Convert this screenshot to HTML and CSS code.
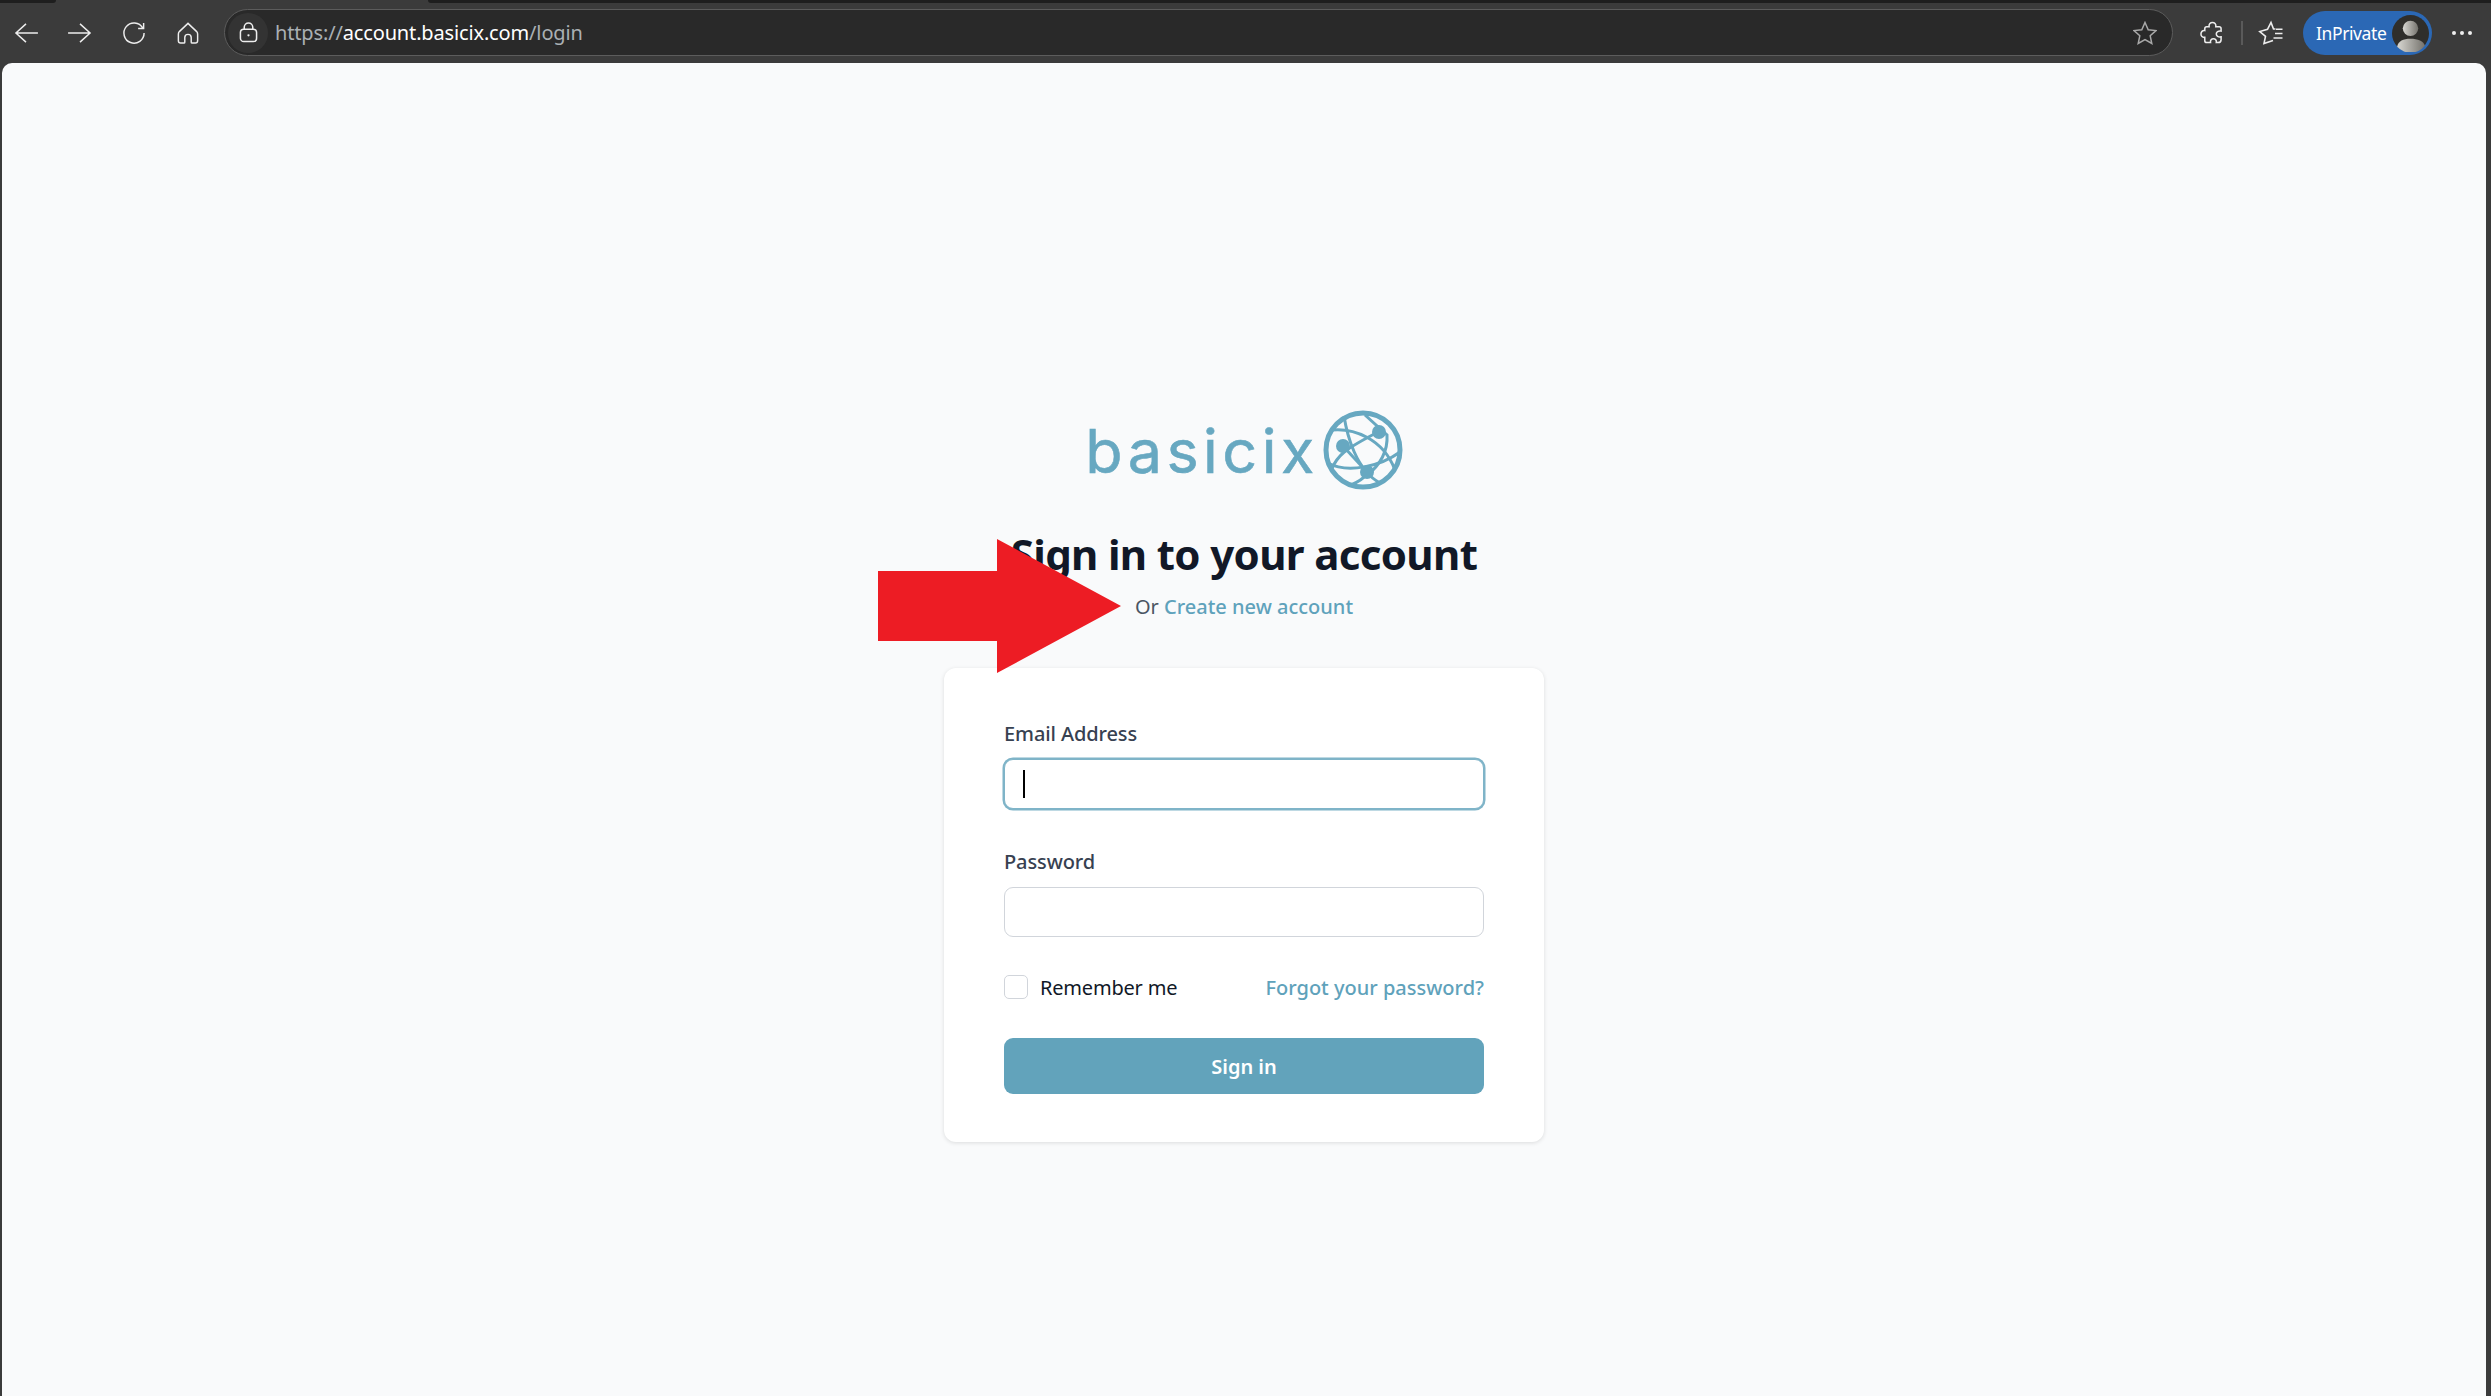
FILE: index.html
```html
<!DOCTYPE html>
<html lang="en">
<head>
    <meta charset="UTF-8">
    <meta name="viewport" content="width=device-width, initial-scale=1.0">
    <title>Sign in - basicix</title>
    <link rel="stylesheet" href="styles.css">
</head>
<body>
    <div class="tab-strip">
        <div class="strip-dark strip-left"></div>
        <div class="strip-tab"></div>
        <div class="strip-dark strip-right"></div>
    </div>
    <header class="toolbar">
        <div class="nav-buttons">
            <svg class="icon" viewBox="0 0 24 24"><path d="M1 12H25M12 2 1 12 12 22"/></svg>
            <svg class="icon" viewBox="0 0 24 24"><path d="M-1 12H23M12 2 23 12 12 22"/></svg>
            <svg class="icon" viewBox="0 0 24 24"><path d="M21.5 6.5A11 11 0 1 0 23 12M22.5 1V7H16.5"/></svg>
            <svg class="icon" viewBox="0 0 24 24"><path d="M12 1.500 2.800 10.200Q1.500 11.500 1.500 13V20.500Q1.500 23 4 23H7.500Q8.500 23 8.500 22V17Q8.500 13.500 12 13.500T15.500 17V22Q15.500 23 16.500 23H20Q22.500 23 22.500 20.500V13Q22.500 11.500 21.200 10.200Z"/></svg>
        </div>
        <div class="address-bar">
            <span class="lock-wrap">
                <svg class="lock" viewBox="0 0 20 22"><rect x="1.500" y="7.500" width="17" height="13" rx="3.500"/><path d="M5.500 7.500V5.500A4.500 4.500 0 0 1 14.500 5.500V7.500"/><circle class="dot" cx="10" cy="14" r="1.200"/></svg>
            </span>
            <span class="url"><span class="url-dim">https://</span>account.basicix.com<span class="url-dim">/login</span></span>
            <svg class="star" viewBox="0 0 24 24"><path d="M12 1.500 15.200 8.800 23 9.600 17.200 14.800 18.800 22.500 12 18.500 5.200 22.500 6.800 14.800 1 9.600 8.800 8.800Z"/></svg>
        </div>
        <div class="tools">
            <svg class="icon puzzle" viewBox="0 0 24 24"><path d="M9.500 5.500C9 2.500 11 1 13 1S17 2.500 16.500 5.500H20C21 5.500 22 6.500 22 7.500V10C19 9.500 17 11 17 13S19 16.500 22 16V19C22 21 21 22 19 22H17C17.500 19.500 16 18 14 18S10.500 19.500 11 22H7C5.500 22 5 21 5 20V16.500C2.500 17 1 15 1 13S2.500 9 5 9.500V7.500C5 6 6 5.500 7 5.500Z"/></svg>
            <span class="divider"></span>
            <svg class="icon fav" viewBox="0 0 24 24"><path d="M16.500 8H14.500L12 1.500 8.500 8.300 .8 10.500 6.500 15.300 5 22.500 14 19.500M17 8.200H23.500M16 12.500H23.500M14.500 17H23.500"/></svg>
            <div class="inprivate">
                <span class="inprivate-text">InPrivate</span>
                <svg class="avatar" viewBox="0 0 36 36">
                    <defs>
                        <linearGradient id="skin" x1="0" x2="1" y1="0" y2="0"><stop offset="0" stop-color="#d8d7d2"/><stop offset="1" stop-color="#74726c"/></linearGradient>
                    </defs>
                    <circle cx="18" cy="18" r="18" fill="#2f2e2b"/>
                    <circle cx="18" cy="13" r="7.500" fill="url(#skin)"/>
                    <path d="M5 31C6 25 11 23 18 23S31 25 32 30A18 18 0 0 1 5 31Z" fill="url(#skin)"/>
                </svg>
            </div>
            <div class="more"><i></i><i></i><i></i></div>
        </div>
    </header>

    <main class="page">
        <div class="logo">
            <span class="logo-text">basicix</span>
            <svg class="globe" viewBox="0 0 80 80">
                <g class="globe-lines">
                    <circle class="globe-ring" cx="40" cy="40" r="37"/>
                    <path d="M21 6C24 25 33 60 57 73"/>
                    <path d="M5 53C25 64 58 56 77 42"/>
                    <path d="M9 20C30 18 60 28 72 60"/>
                    <path d="M42 5 64 25C65 40 58 55 43 66"/>
                    <path d="M8 60C15 45 20 40 57 21"/>
                    <path d="M20 36 44 62"/>
                    <path d="M28 75C35 72 40 69 44 64"/>
                </g>
                <circle class="globe-node" cx="56" cy="22" r="7"/>
                <circle class="globe-node" cx="20" cy="36" r="7"/>
                <circle class="globe-node" cx="44" cy="62" r="7"/>
            </svg>
        </div>
        <h1 class="title">Sign in to your account</h1>
        <p class="subtitle">Or <a href="#" class="link">Create new account</a></p>

        <svg class="red-arrow" viewBox="0 0 243 134"><polygon points="0,32 119,32 119,0 243,67 119,134 119,102 0,102"/></svg>

        <form class="card">
            <div class="field">
                <label class="label">Email Address</label>
                <div class="input input-focus"><span class="caret"></span></div>
            </div>
            <div class="field">
                <label class="label">Password</label>
                <div class="input"></div>
            </div>
            <div class="options">
                <label class="remember"><span class="checkbox"></span>Remember me</label>
                <a href="#" class="link">Forgot your password?</a>
            </div>
            <button type="button" class="submit">Sign in</button>
        </form>
    </main>
</body>
</html>
```

FILE: styles.css
```css
* {
    box-sizing: border-box;
}

html, body {
    height: 100%;
}

body {
    margin: 0;
    background-color: #3b3b3b;
    font-family: "Noto Sans", "Open Sans", sans-serif;
    display: flex;
    flex-direction: column;
    overflow: hidden;
}

/* browser chrome */
.tab-strip {
    display: flex;
    height: 3px;
}

.strip-dark {
    background-color: #1e1e1e;
}

.strip-left {
    width: 56px;
    border-bottom-right-radius: 3px;
}

.strip-tab {
    width: 372px;
}

.strip-right {
    flex: 1;
    border-bottom-left-radius: 3px;
}

.toolbar {
    height: 60px;
    display: flex;
    align-items: center;
    padding: 0 0 0 14px;
}

.nav-buttons {
    display: flex;
    align-items: center;
    gap: 30px;
    width: 210px;
}

.icon {
    width: 24px;
    height: 22px;
    fill: none;
    stroke: #ededed;
    stroke-width: 1.6;
    overflow: visible;
    flex: none;
}

.address-bar {
    width: 1949px;
    height: 47px;
    display: flex;
    align-items: center;
    background-color: #292929;
    border: 1.5px solid #5c5c5c;
    border-radius: 24px;
    margin-top: -1px;
    padding-right: 15px;
}

.lock-wrap {
    width: 40px;
    height: 40px;
    margin-left: 3px;
    border-radius: 50%;
    background-color: #333;
    display: flex;
    align-items: center;
    justify-content: center;
}

.lock {
    width: 19px;
    height: 21px;
    fill: none;
    stroke: #eee;
    stroke-width: 1.6;
}

.lock .dot {
    fill: #eee;
    stroke: none;
}

.url {
    flex: 1;
    margin-left: 7px;
    font-size: 20px;
    letter-spacing: -0.15px;
    color: #fff;
}

.url-dim {
    color: #aab0b4;
}

.star {
    width: 24px;
    height: 24px;
    fill: none;
    stroke: #a8a8a8;
    stroke-width: 1.5;
}

.tools {
    display: flex;
    align-items: center;
    margin-left: 27px;
}

.puzzle {
    width: 23px;
    height: 24px;
}

.divider {
    width: 2px;
    height: 24px;
    background-color: #5a5a5a;
    margin: 0 16px 0 18px;
}

.fav {
    width: 24px;
    height: 24px;
}

.inprivate {
    margin-left: 20px;
    width: 129px;
    height: 44px;
    border-radius: 22px;
    background-color: #2b68b5;
    display: flex;
    align-items: center;
    justify-content: space-between;
    padding: 0 3px 0 13px;
}

.inprivate-text {
    color: #fff;
    font-size: 17.5px;
    letter-spacing: -0.4px;
}

.avatar {
    width: 37px;
    height: 37px;
}

.more {
    display: flex;
    gap: 4px;
    margin-left: 20px;
}

.more i {
    width: 4px;
    height: 4px;
    border-radius: 50%;
    background-color: #eee;
}

/* page */
.page {
    position: relative;
    flex: 1;
    margin: 0 5px 0 2px;
    background-color: #f9fafb;
    border-radius: 10px 10px 0 0;
    display: flex;
    flex-direction: column;
    align-items: center;
    padding-top: 347px;
}

.logo {
    display: flex;
    align-items: center;
    height: 80px;
    gap: 4px;
}

.logo-text {
    font-family: Inter, "Noto Sans", sans-serif;
    font-size: 61px;
    line-height: 80px;
    letter-spacing: 4.5px;
    color: #67a8c1;
    -webkit-text-stroke: 0.6px #67a8c1;
    padding-top: 2px;
}

.globe {
    width: 80px;
    height: 80px;
}

.globe-lines {
    fill: none;
    stroke: #67a8c1;
    stroke-width: 3;
}

.globe-ring {
    stroke-width: 5;
}

.globe-node {
    fill: #67a8c1;
}

.title {
    margin: 37px 0 0;
    font-size: 42px;
    line-height: 54px;
    font-weight: 700;
    letter-spacing: -0.65px;
    color: #111827;
}

.subtitle {
    margin: 11px 0 0;
    font-size: 20px;
    line-height: 30px;
    color: #4b5563;
}

.link {
    color: #5fa2bb;
    text-decoration: none;
    font-weight: 500;
}

.red-arrow {
    position: absolute;
    left: 876px;
    top: 476px;
    width: 243px;
    height: 134px;
    fill: #ed1c24;
}

.card {
    margin-top: 46px;
    width: 600px;
    height: 474px;
    background-color: #fff;
    border-radius: 12px;
    box-shadow: 0 1px 4px rgba(0, 0, 0, 0.12);
    padding: 48px 60px;
}

.field {
    margin-bottom: 35px;
}

.label {
    display: block;
    font-size: 20px;
    line-height: 35px;
    font-weight: 500;
    letter-spacing: -0.1px;
    color: #374151;
    margin-bottom: 8px;
}

.input {
    height: 50px;
    border: 1.5px solid #d1d5db;
    border-radius: 9px;
    background-color: #fff;
    display: flex;
    align-items: center;
    padding-left: 18px;
}

.input-focus {
    border-color: #7fb4c8;
    box-shadow: 0 0 0 1.5px #7fb4c8;
}

.caret {
    width: 2px;
    height: 28px;
    background-color: #000;
}

.options {
    display: flex;
    justify-content: space-between;
    align-items: center;
    height: 30px;
    margin-top: 2px;
    font-size: 20px;
}

.remember {
    display: flex;
    align-items: center;
    gap: 12px;
    letter-spacing: -0.2px;
    color: #111827;
}

.checkbox {
    width: 24px;
    height: 24px;
    border: 1.5px solid #d1d5db;
    border-radius: 5px;
    background-color: #fff;
}

.submit {
    display: block;
    width: 100%;
    height: 56px;
    margin-top: 36px;
    border: none;
    border-radius: 9px;
    background-color: #62a3bb;
    color: #fff;
    font-family: inherit;
    font-size: 20px;
    font-weight: 600;
}
```
